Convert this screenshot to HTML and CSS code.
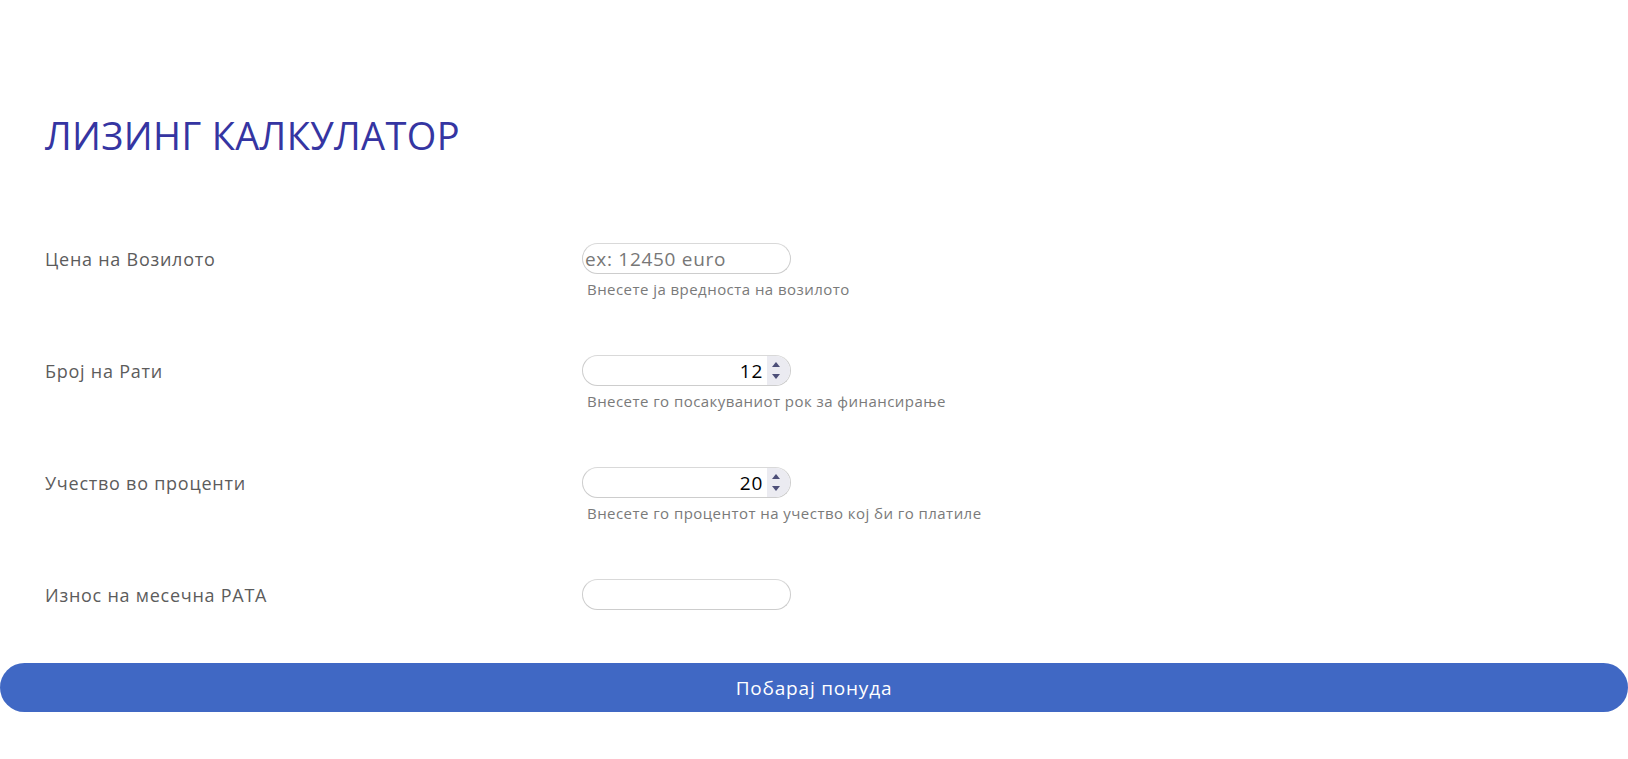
FILE: index.html
```html
<!DOCTYPE html>
<html lang="mk">
<head>
<meta charset="utf-8">
<title>Лизинг калкулатор</title>
<link rel="stylesheet" href="styles.css">
</head>
<body>
<main class="calc">
  <h1 class="calc-title">ЛИЗИНГ КАЛКУЛАТОР</h1>
  <form class="calc-form">
    <div class="calc-row">
      <label class="calc-label" for="price">Цена на Возилото</label>
      <div class="calc-field">
        <div class="calc-wrap">
          <input class="calc-input" id="price" type="text" placeholder="ex: 12450 euro">
        </div>
        <small class="calc-help">Внесете ја вредноста на возилото</small>
      </div>
    </div>
    <div class="calc-row">
      <label class="calc-label" for="rates">Број на Рати</label>
      <div class="calc-field">
        <div class="calc-wrap">
          <input class="calc-input calc-number" id="rates" type="number" value="12">
          <span class="calc-spin"><span class="spin-up"></span><span class="spin-down"></span></span>
        </div>
        <small class="calc-help">Внесете го посакуваниот рок за финансирање</small>
      </div>
    </div>
    <div class="calc-row">
      <label class="calc-label" for="percent">Учество во проценти</label>
      <div class="calc-field">
        <div class="calc-wrap">
          <input class="calc-input calc-number" id="percent" type="number" value="20">
          <span class="calc-spin"><span class="spin-up"></span><span class="spin-down"></span></span>
        </div>
        <small class="calc-help">Внесете го процентот на учество кој би го платиле</small>
      </div>
    </div>
    <div class="calc-row calc-row-last">
      <label class="calc-label" for="monthly">Износ на месечна РАТА</label>
      <div class="calc-field">
        <div class="calc-wrap">
          <input class="calc-input" id="monthly" type="text">
        </div>
      </div>
    </div>
    <button class="calc-button" type="button">Побарај понуда</button>
  </form>
</main>
</body>
</html>
```
FILE: styles.css
```css
* { box-sizing: border-box; }
html, body { margin: 0; padding: 0; background: #fff; }
body {
  font-family: "Open Sans", "Noto Sans", "DejaVu Sans", sans-serif;
  color: #5f5f5f;
}
.calc { padding-top: 113px; }
.calc-title {
  margin: 0 0 86px 0;
  padding-left: 45px;
  font-size: 38px;
  line-height: 44px;
  font-weight: 400;
  color: #3535a2;
  letter-spacing: 0.35px;
}
.calc-form { display: flex; flex-direction: column; }
.calc-row {
  display: grid;
  grid-template-columns: 537px 1fr;
  padding-left: 45px;
  height: 112px;
}
.calc-row-last { height: 84px; }
.calc-label {
  height: 31px;
  display: flex;
  align-items: center;
  font-size: 18px;
  letter-spacing: 0.75px;
  color: #5c5c5c;
}
.calc-field { display: flex; flex-direction: column; align-items: flex-start; }
.calc-wrap { position: relative; width: 209px; height: 31px; }
.calc-input {
  width: 209px;
  height: 31px;
  border: 1px solid #cdcdcd;
  border-top-color: #d9d9d9;
  border-radius: 16px;
  padding: 0 2px;
  font-family: inherit;
  font-size: 19px;
  letter-spacing: 0.7px;
  color: #000;
  background: #fff;
  outline: none;
  -moz-appearance: textfield;
}
.calc-input::placeholder { color: #777; }
.calc-number { text-align: right; padding-right: 27px; }
.calc-number::-webkit-inner-spin-button,
.calc-number::-webkit-outer-spin-button { -webkit-appearance: none; margin: 0; }
.calc-spin {
  position: absolute;
  top: 1px;
  right: 1px;
  bottom: 1px;
  width: 23px;
  border-radius: 0 15px 15px 0;
  background: #ebebf1;
  display: flex;
  flex-direction: column;
  align-items: center;
  justify-content: center;
  gap: 7px;
  padding-right: 5px;
}
.spin-up, .spin-down {
  width: 0;
  height: 0;
  border-left: 4px solid transparent;
  border-right: 4px solid transparent;
}
.spin-up { border-bottom: 5px solid #4d4f78; }
.spin-down { border-top: 5px solid #4d4f78; }
.calc-help {
  margin-top: 5px;
  padding-left: 5px;
  font-size: 15px;
  letter-spacing: 0.45px;
  color: #7a7a7a;
  white-space: nowrap;
}
.calc-button {
  display: block;
  width: 100%;
  height: 49px;
  border: none;
  border-radius: 25px;
  background: #4068c4;
  color: #fff;
  font-family: inherit;
  font-size: 19px;
  letter-spacing: 0.8px;
  cursor: pointer;
}
```
